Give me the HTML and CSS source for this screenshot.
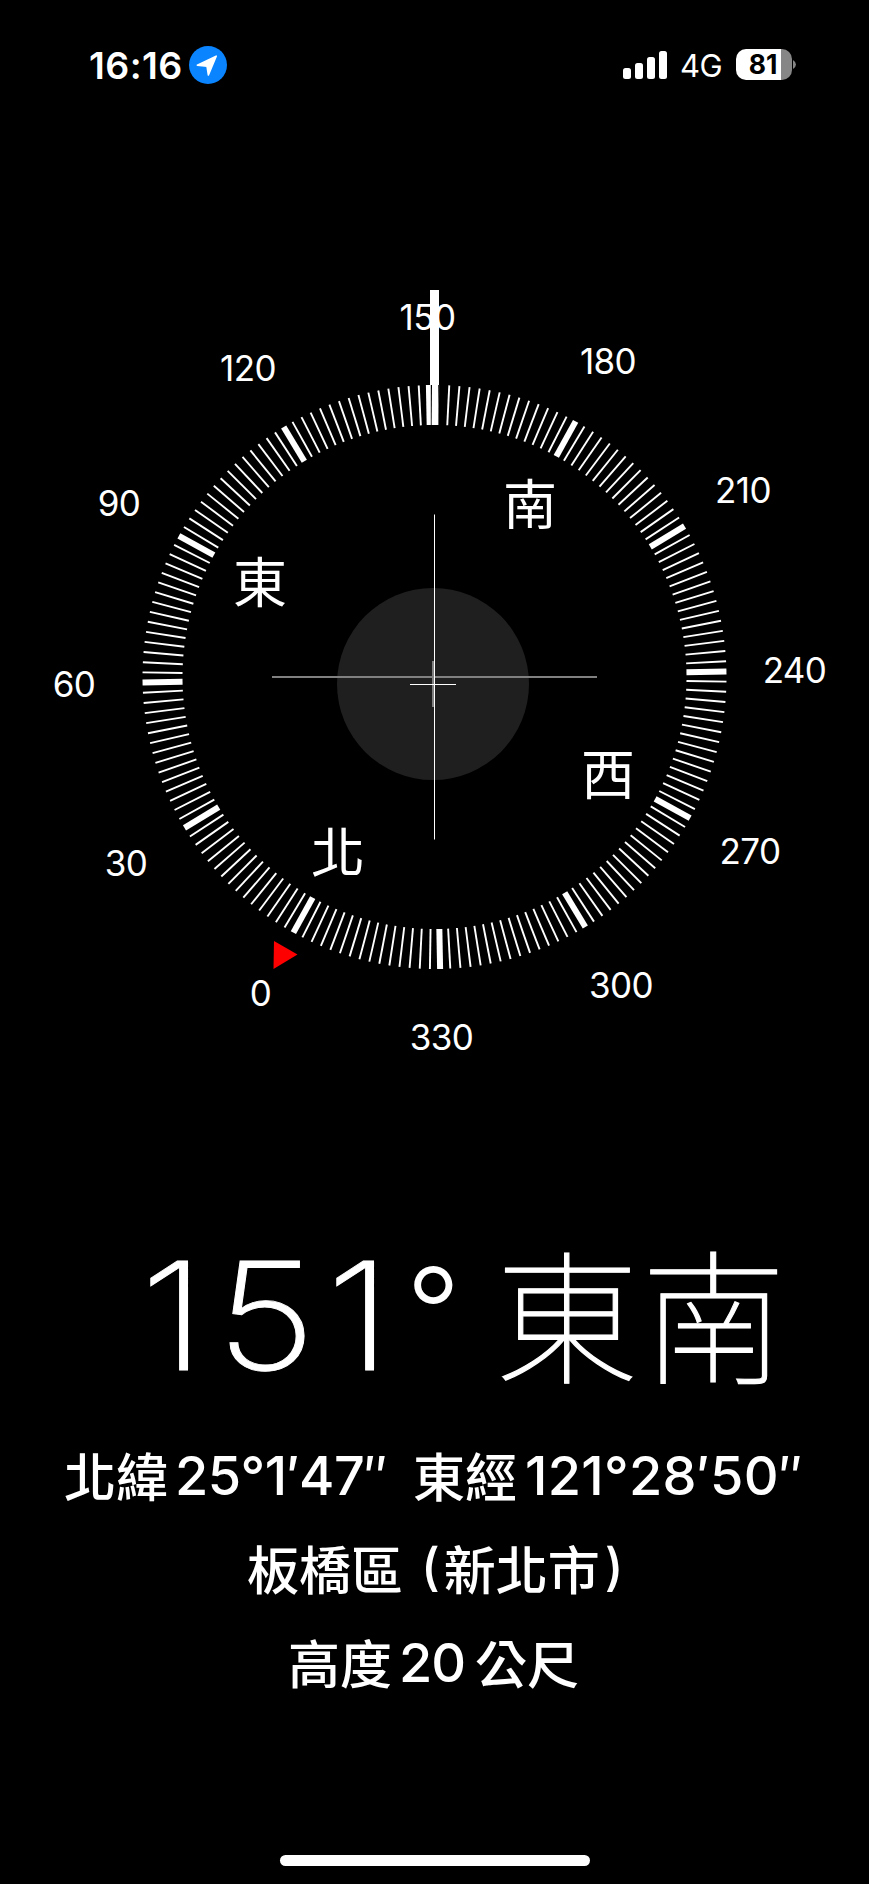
FILE: index.html
```html
<!DOCTYPE html>
<html lang="zh-Hant">
<head>
<meta charset="utf-8">
<title>指南針</title>
<link rel="stylesheet" href="styles.css">
</head>
<body>
<main class="screen">
  <header class="status">
    <div class="status-left">
      <span class="clock">16:16</span>
      <svg class="location" width="38" height="38" viewBox="0 0 38 38"><circle cx="19" cy="19" r="19" fill="#0a84ff"/><path d="M27.200 10.200 L19.400 29 L18 20.200 L8.300 19.200Z" fill="#fff" stroke="#fff" stroke-width="1.600" stroke-linejoin="round"/></svg>
    </div>
    <div class="status-right">
      <svg class="signal" width="44" height="28" viewBox="0 0 44 28" fill="#fff"><rect x="0" y="17" width="8" height="11" rx="2.500"/><rect x="12" y="12" width="8" height="16" rx="2.500"/><rect x="24" y="6" width="8" height="22" rx="2.500"/><rect x="36" y="0" width="8" height="28" rx="2.500"/></svg>
      <span class="network">4G</span>
      <div class="battery"><span class="battery-body">81</span><svg class="battery-cap" width="3" height="9" viewBox="0 0 3 9"><path d="M0 0Q3 2 3 4.500T0 9Z" fill="#868686"/></svg></div>
    </div>
  </header>

  <svg class="compass" width="869" height="820" viewBox="0 260 869 820">
    <defs>
      <g id="sector">
        <path class="major" d="M0-292V-252"/>
        <g id="pair"><path id="t" class="minor" d="M0-292V-252" transform="rotate(2)"/><use href="#t" transform="rotate(2)"/></g>
        <use href="#pair" transform="rotate(4)"/><use href="#pair" transform="rotate(8)"/><use href="#pair" transform="rotate(12)"/><use href="#pair" transform="rotate(16)"/><use href="#pair" transform="rotate(20)"/><use href="#pair" transform="rotate(24)"/>
      </g>
    </defs>
    <circle cx="433" cy="684" r="96" fill="#1f1f1f"/>
    <g transform="translate(434.500 677) rotate(-1.100)">
      <use href="#sector"/><use href="#sector" transform="rotate(30)"/><use href="#sector" transform="rotate(60)"/><use href="#sector" transform="rotate(90)"/><use href="#sector" transform="rotate(120)"/><use href="#sector" transform="rotate(150)"/><use href="#sector" transform="rotate(180)"/><use href="#sector" transform="rotate(210)"/><use href="#sector" transform="rotate(240)"/><use href="#sector" transform="rotate(270)"/><use href="#sector" transform="rotate(300)"/><use href="#sector" transform="rotate(330)"/>
    </g>
    <g class="degree">
      <text x="427.500" y="329.500">150</text>
      <text x="608" y="374">180</text>
      <text x="743" y="503">210</text>
      <text x="794.500" y="683">240</text>
      <text x="750" y="864">270</text>
      <text x="621" y="998">300</text>
      <text x="441.500" y="1050">330</text>
      <text x="260.500" y="1005.500">0</text>
      <text x="126" y="876">30</text>
      <text x="74" y="697">60</text>
      <text x="119" y="515.500">90</text>
      <text x="248" y="381">120</text>
    </g>
    <g class="cardinal">
      <text x="530" y="524.500">南</text>
      <text x="260" y="603">東</text>
      <text x="608" y="795">西</text>
      <text x="338" y="873">北</text>
    </g>
    <path d="M274 941L297.500 954.500L273.500 969Z" fill="#f00"/>
    <path class="cross-soft" d="M272 677H597M433 661V707"/>
    <path class="cross-thin" d="M434.500 514.500V839.500M410 684.500H456"/>
    <path class="needle" d="M434.500 290V385"/>
    <path d="M430.800 385H441V426H430.800Z" fill="#000"/>
    <path d="M438.500 385H439.200L438.800 425H437.500Z" fill="#777"/>
    <path d="M432 385H438L438 425H431.600Z" fill="#fff"/>
  </svg>

  <section class="readout">
    <h1 class="heading"><span class="angle"><span class="digits">151</span><span class="deg">°</span></span><span class="direction">東南</span></h1>
    <p class="line coords"><span class="north">北緯</span><span class="num lat">25°1′47<span class="second">″</span></span><span class="east">東經</span><span class="num lon">121°28′50<span class="second">″</span></span></p>
    <p class="line place"><span class="district">板橋區</span><span class="paren">(</span><span class="city">新北市</span><span class="paren">)</span></p>
    <p class="line altitude"><span>高度</span><span class="num alt">20</span><span>公尺</span></p>
  </section>
  <div class="home"></div>
</main>
</body>
</html>
```
FILE: styles.css
```css
body { margin: 0; background: #000; }
.screen { width: 869px; height: 1884px; background: #000; color: #fff; font-family: Inter, "Noto Sans CJK TC", sans-serif; display: flex; flex-direction: column; overflow: hidden; }
.status { height: 130px; box-sizing: border-box; padding: 0 73px 0 89px; display: flex; justify-content: space-between; }
.status-left, .status-right { display: flex; height: 130px; align-items: center; }
.clock { font-size: 37.500px; font-weight: 600; letter-spacing: .4px; width: 100px; white-space: nowrap; }
.location { flex: none; }
.network { font-size: 31px; margin: 1px 0 0 13px; width: 43px; letter-spacing: -.5px; }
.battery { display: flex; align-items: center; gap: 1px; margin: -1px 0 0 13px; }
.battery-body { width: 56px; height: 31px; border-radius: 10px; background: linear-gradient(90deg, #fff 45px, #868686 45px); color: #000; font-weight: 700; font-size: 26.500px; line-height: 31px; text-align: center; letter-spacing: -.2px; text-indent: -2px; }
.compass { display: block; margin-top: 130px; flex: none; }
.major { stroke: #fff; stroke-width: 6; }
.minor { stroke: #fff; stroke-width: 1.900; }
.degree { font-size: 35px; font-weight: 400; fill: #fff; text-anchor: middle; letter-spacing: -.6px; }
.cardinal { font-size: 54px; font-family: "Noto Sans CJK TC", sans-serif; fill: #fff; text-anchor: middle; }
.cross-soft { stroke: #808080; stroke-width: 2; }
.cross-thin { stroke: #fff; stroke-width: 1; }
.needle { stroke: #fff; stroke-width: 9; }
.readout { margin-top: 140px; display: flex; flex-direction: column; }
.heading { margin: 0; font-weight: 200; height: 190px; display: flex; align-items: center; white-space: nowrap; }
.angle { font-size: 150px; line-height: 190px; margin: 2px 0 0 140px; width: 355px; }
.digits { display: inline-block; width: 266px; letter-spacing: 9px; transform: scaleX(1.15); transform-origin: left; -webkit-text-stroke: .9px #fff; }
.deg { font-size: 120px; font-weight: 350; line-height: 1; vertical-align: 16px; }
.direction { font-size: 144px; line-height: 190px; margin-top: -10px; letter-spacing: 2.500px; font-family: "Noto Sans CJK TC", sans-serif; font-weight: 100; -webkit-text-stroke: 1.100px #fff; }
.line { margin: 0; height: 93.500px; display: flex; align-items: center; font-size: 52px; font-weight: 500; white-space: nowrap; }
.num { font-size: 54px; padding-top: 3px; box-sizing: border-box; }
.second { display: inline-block; transform: scaleX(.9); transform-origin: left; }
.coords { margin-top: 17.500px; padding-left: 64px; }
.lat { width: 238px; margin-left: 7px; letter-spacing: -.5px; }
.lon { margin-left: 8px; letter-spacing: .3px; }
.place { padding-left: 247px; }
.paren { font-size: 51px; padding-bottom: 2px; }
.district { width: 174px; }
.city { margin: 0 5px 0 4px; }
.altitude { padding-left: 288px; }
.alt { width: 77px; margin-left: 6px; padding-left: 1px; letter-spacing: -1px; }
.home { position: absolute; left: 280px; top: 1855px; width: 310px; height: 11px; border-radius: 6px; background: #fff; }
```
